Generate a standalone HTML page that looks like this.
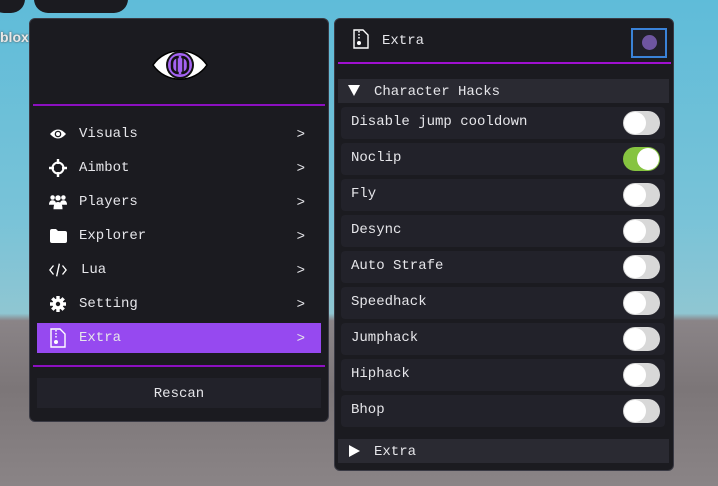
<!DOCTYPE html>
<html><head><meta charset="utf-8"><style>
*{margin:0;padding:0;box-sizing:border-box}
body{width:718px;height:486px;overflow:hidden;position:relative;font-family:"Liberation Mono",monospace;font-size:14px;color:#e6e6ea;
background:linear-gradient(180deg,#5fbcd9 0%,#79c3d8 45%,#8fc6d2 64.5%,#8a8487 66%,#7c7678 80%,#8a8486 100%)}
.abs{position:absolute}
.panel{position:absolute;background:#1b1b20;border:1px solid #3a3a44;border-radius:6px}
.item{position:absolute;left:7px;width:284px;height:30px;display:flex;align-items:center}
.item .ic{width:18px;margin-left:12px;display:flex;justify-content:center}
.item .t{margin-left:12px}
.item .ch{position:absolute;right:16px;top:8px}
.row{position:absolute;left:6px;width:324px;height:32px;background:#22222a;border-radius:4px}
.row span{position:absolute;left:10px;top:7px}
.tg{position:absolute;left:282px;top:4px;width:37px;height:24px;border-radius:12px;background:#d8d8d8}
.tg::after{content:"";position:absolute;left:1px;top:1px;width:22px;height:22px;border-radius:50%;background:#fff}
.tg.on{background:#86c440}
.tg.on::after{left:14px}
.sec{position:absolute;left:3px;width:331px;height:24px;background:#2a2a32}
.sec span{position:absolute;left:36px;top:5px}
.line{position:absolute;height:2px;background:#8c10c0}
</style></head><body>
<div class="abs" style="left:-10px;top:-20px;width:35px;height:33px;background:#1b1b20;border-radius:14px"></div>
<div class="abs" style="left:34px;top:-20px;width:94px;height:33px;background:#1b1b20;border-radius:14px"></div>
<div class="abs" style="left:0;top:29px;font-family:'Liberation Sans',sans-serif;font-size:14px;font-weight:bold;color:#e8e8e8;text-shadow:0 0 2px #444">blox</div>

<div class="panel" style="left:29px;top:18px;width:300px;height:404px">
  <svg class="abs" style="left:122px;top:31px" width="56" height="30" viewBox="0 0 56 30">
    <path d="M1 15 C14 -4 42 -4 55 15 C42 34 14 34 1 15Z" fill="#fff" stroke="#000" stroke-width="1.5"/>
    <circle cx="28" cy="15" r="14" fill="#111"/>
    <circle cx="28" cy="15" r="12" fill="#a463f2"/>
    <rect x="20" y="7" width="16" height="16" rx="6" fill="none" stroke="#111" stroke-width="2.5"/>
    <line x1="28" y1="6" x2="28" y2="24" stroke="#a463f2" stroke-width="2.5"/>
    <line x1="25" y1="7" x2="25" y2="23" stroke="#111" stroke-width="1.5"/>
    <line x1="31" y1="7" x2="31" y2="23" stroke="#111" stroke-width="1.5"/>
  </svg>
  <div class="line" style="left:3px;top:85px;width:292px"></div>
  <div class="item" style="top:100px"><div class="ic"><svg width="18" height="12" viewBox="0 0 18 12"><path d="M1 6Q9 -3 17 6Q9 15 1 6Z" fill="#fff"/><circle cx="9" cy="6" r="3.3" fill="#1b1b20"/><circle cx="9" cy="6" r="2" fill="#fff"/></svg></div><span class="t">Visuals</span><span class="ch">&gt;</span></div>
  <div class="item" style="top:134px"><div class="ic"><svg width="18" height="18" viewBox="0 0 18 18"><circle cx="9" cy="9" r="5.5" fill="none" stroke="#fff" stroke-width="2"/><path d="M9 0v5M9 13v5M0 9h5M13 9h5" stroke="#fff" stroke-width="2.4"/></svg></div><span class="t">Aimbot</span><span class="ch">&gt;</span></div>
  <div class="item" style="top:168px"><div class="ic"><svg width="20" height="16" viewBox="0 0 20 16"><circle cx="4" cy="3" r="2.5" fill="#fff"/><circle cx="10" cy="3.5" r="3" fill="#fff"/><circle cx="16" cy="3" r="2.5" fill="#fff"/><path d="M0 11q0-5 4-5t4 5zM12 11q0-5 4-5t4 5z" fill="#fff"/><path d="M5 16q0-8 5-8t5 8z" fill="#fff"/></svg></div><span class="t">Players</span><span class="ch">&gt;</span></div>
  <div class="item" style="top:202px"><div class="ic"><svg width="17" height="14" viewBox="0 0 17 14"><path d="M0 2q0-2 2-2h4l2 2h7q2 0 2 2v8q0 2-2 2H2q-2 0-2-2z" fill="#fff"/></svg></div><span class="t">Explorer</span><span class="ch">&gt;</span></div>
  <div class="item" style="top:236px"><div class="ic"><svg width="20" height="14" viewBox="0 0 20 14"><path d="M5 2L1 7l4 5M15 2l4 5-4 5M11.5 0L8.5 14" fill="none" stroke="#fff" stroke-width="1.5"/></svg></div><span class="t" style="margin-left:14px">Lua</span><span class="ch">&gt;</span></div>
  <div class="item" style="top:270px"><div class="ic"><svg width="16" height="16" viewBox="0 0 16 16"><circle cx="8" cy="8" r="5.5" fill="#fff"/><path d="M8 0v16M0 8h16M2.3 2.3l11.4 11.4M13.7 2.3L2.3 13.7" stroke="#fff" stroke-width="3.4"/><circle cx="8" cy="8" r="2.2" fill="#1b1b20"/></svg></div><span class="t">Setting</span><span class="ch">&gt;</span></div>
  <div class="item" style="top:304px;background:#9649f0"><div class="ic"><svg width="16" height="20" viewBox="0 0 16 20"><path d="M1 1h9l5 5v13H1z" fill="none" stroke="#fff" stroke-width="1.4"/><path d="M6 2v8" stroke="#fff" stroke-dasharray="1.5 1.5" stroke-width="1.5"/><circle cx="6" cy="14" r="2" fill="#fff"/></svg></div><span class="t">Extra</span><span class="ch">&gt;</span></div>
  <div class="line" style="left:3px;top:346px;width:292px"></div>
  <div class="abs" style="left:7px;top:359px;width:284px;height:30px;background:#22222a;text-align:center;line-height:32px">Rescan</div>
</div>

<div class="panel" style="left:334px;top:18px;width:340px;height:453px">
  <svg class="abs" style="left:18px;top:10px" width="16" height="20" viewBox="0 0 16 20"><path d="M1 1h9l5 5v13H1z" fill="none" stroke="#fff" stroke-width="1.4"/><path d="M6 2v8" stroke="#fff" stroke-dasharray="1.5 1.5" stroke-width="1.5"/><circle cx="6" cy="14" r="2" fill="#fff"/></svg>
  <span class="abs" style="left:47px;top:14px">Extra</span>
  <div class="abs" style="left:296px;top:9px;width:36px;height:30px;border:2px solid #3a82d8;background:#1f1f28"></div>
  <div class="abs" style="left:307px;top:16px;width:15px;height:15px;border-radius:50%;background:#6e55a0"></div>
  <div class="line" style="left:3px;top:43px;width:333px;background:#a010d0"></div>
  <div class="sec" style="top:60px"><svg class="abs" style="left:10px;top:6px" width="12" height="11"><path d="M0 0h12L6 11z" fill="#fff"/></svg><span>Character Hacks</span></div>
  <div class="row" style="top:88px"><span>Disable jump cooldown</span><div class="tg"></div></div>
  <div class="row" style="top:124px"><span>Noclip</span><div class="tg on"></div></div>
  <div class="row" style="top:160px"><span>Fly</span><div class="tg"></div></div>
  <div class="row" style="top:196px"><span>Desync</span><div class="tg"></div></div>
  <div class="row" style="top:232px"><span>Auto Strafe</span><div class="tg"></div></div>
  <div class="row" style="top:268px"><span>Speedhack</span><div class="tg"></div></div>
  <div class="row" style="top:304px"><span>Jumphack</span><div class="tg"></div></div>
  <div class="row" style="top:340px"><span>Hiphack</span><div class="tg"></div></div>
  <div class="row" style="top:376px"><span>Bhop</span><div class="tg"></div></div>
  <div class="sec" style="top:420px"><svg class="abs" style="left:11px;top:6px" width="11" height="12"><path d="M0 0v12l11-6z" fill="#fff"/></svg><span>Extra</span></div>
</div>
</body></html>
